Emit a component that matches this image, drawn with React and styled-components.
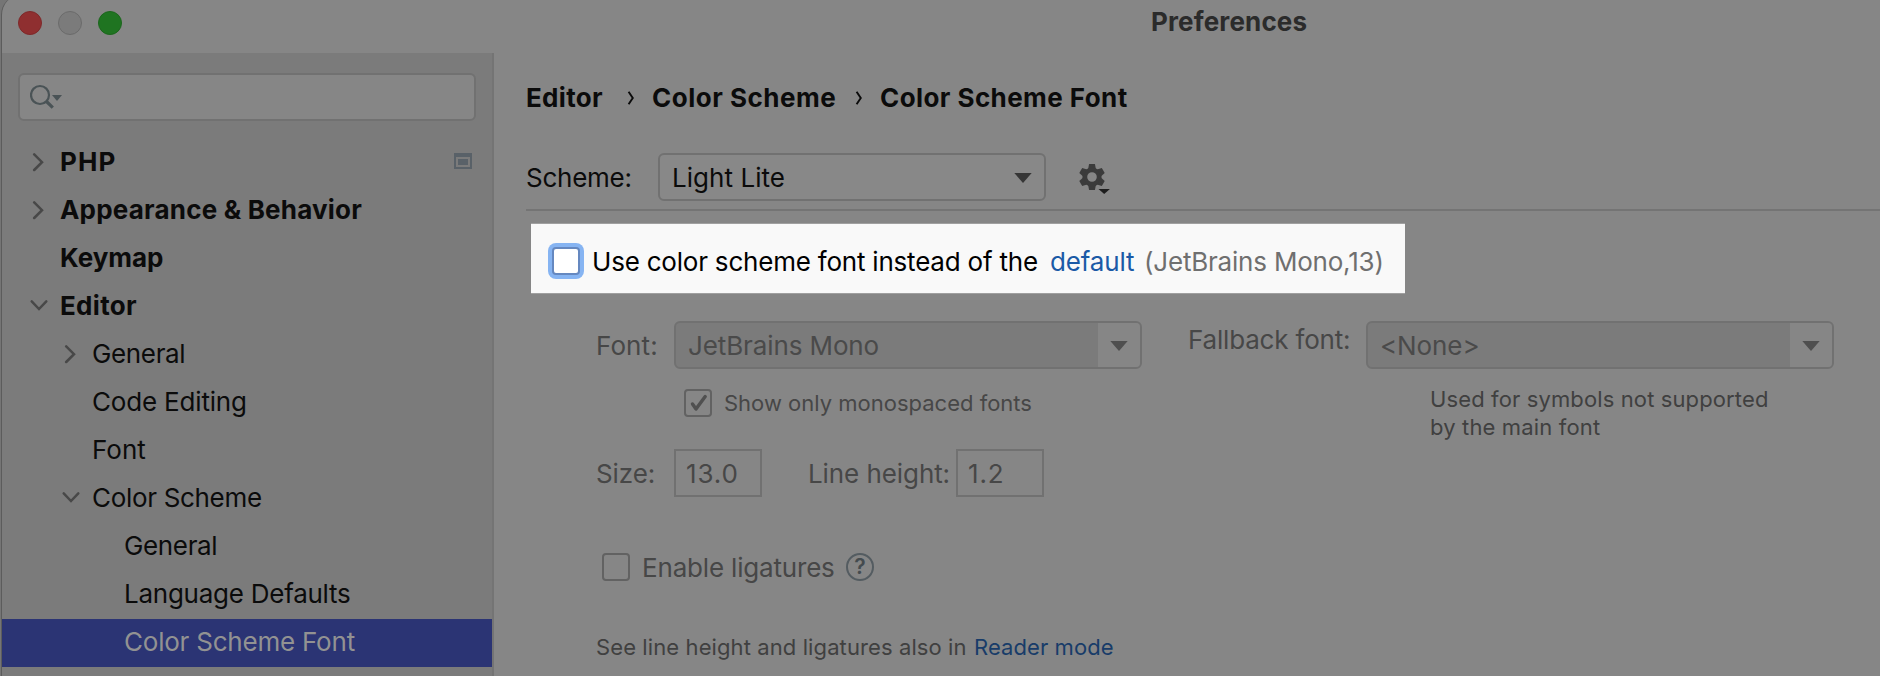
import React from 'react';
import styled, { createGlobalStyle } from 'styled-components';

const c = {
  pane: '#868686',
  side: '#7b7b7b',
  line: '#717171',
  ink: '#0b0b0b',
  muted: '#474747',
  hint: '#404040',
};

const Global = createGlobalStyle`
  * { box-sizing: border-box; }
  body {
    margin: 0;
    overflow: hidden;
    background: #757575;
    font-family: Inter, "Liberation Sans", sans-serif;
    font-size: 26px;
    line-height: 31px;
    color: ${c.ink};
  }
`;

const Window = styled.div`
  display: flex;
  flex-direction: column;
  height: 681px;
  margin: -5px 0 0 1px;
  overflow: hidden;
  border-left: 1px solid #5c5c5c;
  border-top-left-radius: 20px;
  background: ${c.pane};
`;

const TitleBar = styled.header`
  display: flex;
  align-items: center;
  flex: none;
  height: 58px;
  padding: 0 0 2px 16px;
`;

const Lights = styled.div`
  display: flex;
  gap: 16px;
  width: 1133px;
`;

const Light = styled.span`
  width: 24px;
  height: 24px;
  border-radius: 50%;
  border: 1px solid ${(p) => p.$edge};
  background: ${(p) => p.$fill};
`;

const Text = styled.span`
  display: block;
  flex: none;
  white-space: pre;
  color: ${(p) => p.$color || 'inherit'};
  font-size: ${(p) => (p.$small ? 22 : 26)}px;
  line-height: ${(p) => (p.$small ? 28 : 31)}px;
  font-weight: ${(p) => p.$weight || 400};
  letter-spacing: ${(p) => p.$track || 0}px;
  width: ${(p) => (p.$width ? `${p.$width}px` : 'auto')};
`;

const Title = styled(Text)`
  padding-bottom: 3px;
`;

const Body = styled.div`
  display: flex;
  flex: 1;
  min-height: 0;
`;

const Sidebar = styled.aside`
  flex: none;
  width: 492px;
  padding-top: 20px;
  border-right: 2px solid #747474;
  background: ${c.side};
`;

const Search = styled.div`
  display: flex;
  align-items: center;
  height: 48px;
  margin: 0 16px 18px;
  padding-left: 10px;
  border: 2px solid ${c.line};
  border-radius: 6px;
  background: ${c.pane};
`;

const TreeRow = styled.div`
  display: flex;
  align-items: center;
  height: 48px;
  padding: 0 20px 0 ${(p) => 27 + p.$level * 32}px;
  color: ${(p) => (p.$selected ? '#929292' : c.ink)};
  background: ${(p) => (p.$selected ? '#2b3474' : 'transparent')};
`;

const Toggle = styled.svg`
  flex: none;
  width: 20px;
  height: 20px;
  margin-right: 11px;
  fill: none;
  stroke: #484848;
  stroke-width: 2.5;
  stroke-linecap: round;
`;

const TreeLabel = styled(Text)`
  flex: 1;
  padding-bottom: 4px;
`;

const Badge = styled.svg`
  width: 18px;
  height: 16px;
  margin-bottom: 4px;
`;

const Main = styled.main`
  flex: 1;
  min-width: 0;
`;

const Breadcrumbs = styled.nav`
  display: flex;
  align-items: center;
  height: 89px;
  padding-left: 32px;
`;

const Crumb = styled(Text)`
  font-weight: 700;
`;

const SchemeRow = styled.div`
  display: flex;
  align-items: center;
  height: 48px;
  margin-top: 11px;
  padding-left: 32px;
`;

const Select = styled.div`
  display: flex;
  align-items: center;
  justify-content: space-between;
  flex: none;
  width: ${(p) => p.$width}px;
  height: 48px;
  padding-left: 12px;
  overflow: hidden;
  border: 2px solid ${c.line};
  border-radius: 6px;
  background: ${(p) => (p.$disabled ? c.side : '#888')};
  color: ${(p) => (p.$disabled ? '#4a4a4a' : c.ink)};
`;

const SelectButton = styled.span`
  display: flex;
  align-items: center;
  align-self: stretch;
  width: 42px;
  padding-left: 12px;
  padding-top: 2px;
  background: ${(p) => (p.$disabled ? c.pane : 'transparent')};
`;

const Gear = styled.svg`
  width: 34px;
  height: 34px;
  margin-left: 32px;
`;

const Divider = styled.div`
  height: 2px;
  margin: 8px 0 0 32px;
  background: #747474;
`;

const Spotlight = styled.div`
  display: flex;
  align-items: center;
  width: 874px;
  height: 71px;
  margin: 12px 0 0 37px;
  padding: 5px 0 0 21px;
  border: solid #a0a0a0;
  border-width: 1px 0;
  background: #f9f9f9;
  background-clip: padding-box;
`;

const CheckBox = styled.span`
  display: flex;
  flex: none;
  width: 28px;
  height: 28px;
  border: 2px solid ${(p) => (p.$focused ? '#6588c0' : '#626262')};
  border-radius: 4px;
  background: ${(p) => (p.$focused ? '#fff' : 'transparent')};
  box-shadow: ${(p) => (p.$focused ? '0 0 0 4px #86b4f2' : 'none')};
`;

const Form = styled.section`
  padding: 27px 0 0 102px;
  color: ${c.muted};
`;

const Columns = styled.div`
  display: flex;
  height: 120px;
`;

const Column = styled.div`
  flex: none;
  width: ${(p) => p.$width}px;
`;

const Row = styled.div`
  display: flex;
  align-items: center;
  height: ${(p) => p.$height || 48}px;
  margin: ${(p) => p.$top || 0}px 0 0 ${(p) => p.$left || 0}px;
`;

const Raised = styled.div`
  padding-bottom: 12px;
`;

const Hint = styled.div`
  margin: 16px 0 0 242px;
`;

const NumberField = styled.div`
  display: flex;
  align-items: center;
  flex: none;
  width: 88px;
  height: 48px;
  padding-left: 10px;
  border: 2px solid ${c.line};
`;

const Help = styled.span`
  display: flex;
  align-items: center;
  justify-content: center;
  width: 28px;
  height: 28px;
  border: 2px solid #545c61;
  border-radius: 50%;
  color: #444b4f;
  font-size: 21px;
  font-weight: 600;
  line-height: 24px;
`;

const Gap = styled.span`
  flex: none;
  width: ${(p) => p.$w}px;
`;

const Triangle = ({ color }) => (
  <svg width="18" height="10" viewBox="0 0 18 10">
    <path d="M0.3 0h17.4L9 10z" fill={color} />
  </svg>
);

const CrumbArrow = () => (
  <svg width="8" height="14" viewBox="0 0 8 14">
    <path d="M1.6 0.7 L5.8 7 L1.6 13.3" fill="none" stroke={c.ink} strokeWidth="1.9" />
  </svg>
);

const ModuleIcon = () => (
  <Badge viewBox="0 0 18 16">
    <path fillRule="evenodd" fill="#596168" d="M0 0h18v16H0zM2 4v10h14V4zM4 6h10v6H4z" />
  </Badge>
);

const tree = [
  { label: 'PHP', level: 0, state: 'closed', track: 1.1, module: true },
  { label: 'Appearance & Behavior', level: 0, state: 'closed', track: 0.2 },
  { label: 'Keymap', level: 0, track: -0.03 },
  { label: 'Editor', level: 0, state: 'open', track: 0.3 },
  { label: 'General', level: 1, state: 'closed', track: -0.35 },
  { label: 'Code Editing', level: 1, track: -0.18 },
  { label: 'Font', level: 1, track: 0 },
  { label: 'Color Scheme', level: 1, state: 'open', track: -0.32 },
  { label: 'General', level: 2, track: -0.35 },
  { label: 'Language Defaults', level: 2, track: -0.25 },
  { label: 'Color Scheme Font', level: 2, track: -0.22, selected: true },
];

const togglePaths = {
  closed: 'M5.2 1.4 L13 9.2 L5.2 17',
  open: 'M2.7 4.4 L10 12 L17.3 4.4',
};

const Combo = ({ children, track }) => (
  <Select $width={468} $disabled>
    <Text $track={track}>{children}</Text>
    <SelectButton $disabled>
      <Triangle color="#4f4f4f" />
    </SelectButton>
  </Select>
);

export default function App() {
  return (
    <>
      <Global />
      <Window>
        <TitleBar>
          <Lights>
            <Light $fill="#8f2f30" $edge="#7e292a" />
            <Light $fill="#7b7b7b" $edge="#6b6b6b" />
            <Light $fill="#1f7421" $edge="#1c661d" />
          </Lights>
          <Title $weight={700} $color="#2b2b2b" $track={0.15}>Preferences</Title>
        </TitleBar>
        <Body>
          <Sidebar>
            <Search>
              <svg width="36" height="30" viewBox="0 0 36 30">
                <circle cx="10" cy="13" r="9" fill="none" stroke="#4a5356" strokeWidth="2.2" />
                <path d="M16.5 19.5 L22.8 25.6" stroke="#4a5356" strokeWidth="3.2" />
                <path d="M22 13h10l-5 6z" fill="#4a5356" />
              </svg>
            </Search>
            {tree.map((n, i) => (
              <TreeRow key={i} $level={n.level} $selected={n.selected}>
                <Toggle viewBox="0 0 20 20">
                  {n.state && <path d={togglePaths[n.state]} />}
                </Toggle>
                <TreeLabel $weight={n.level ? 400 : 700} $track={n.track}>{n.label}</TreeLabel>
                {n.module && <ModuleIcon />}
              </TreeRow>
            ))}
          </Sidebar>
          <Main>
            <Breadcrumbs>
              <Crumb $width={101} $track={0.3}>Editor</Crumb>
              <CrumbArrow />
              <Gap $w={17} />
              <Crumb $width={203} $track={0.5}>Color Scheme</Crumb>
              <CrumbArrow />
              <Gap $w={17} />
              <Crumb $track={0.42}>Color Scheme Font</Crumb>
            </Breadcrumbs>
            <SchemeRow>
              <Text $width={132} $track={-0.25}>Scheme:</Text>
              <Select $width={388}>
                <Text $track={0.05}>Light Lite</Text>
                <SelectButton>
                  <Triangle color="#363636" />
                </SelectButton>
              </Select>
              <Gear viewBox="0 0 34 34">
                <g transform="translate(14 17)" fill="#3b3b3b">
                  <circle r="7.2" fill="none" stroke="#3b3b3b" strokeWidth="4.8" />
                  {[0, 60, 120, 180, 240, 300].map((a) => (
                    <path key={a} d="M-2.9 -13h5.8l1 5h-7.8z" transform={`rotate(${a})`} />
                  ))}
                </g>
                <path d="M20.5 29h11.4l-5.7 5z" fill="#1d1d1d" />
              </Gear>
            </SchemeRow>
            <Divider />
            <Spotlight>
              <CheckBox $focused />
              <Gap $w={12} />
              <Text $color="#000" $width={458} $track={-0.21}>Use color scheme font instead of the</Text>
              <Text $color="#1b5aa6" $width={94} $track={-0.15}>default</Text>
              <Text $color="#6f6f6f" $track={-0.2}>(JetBrains Mono,13)</Text>
            </Spotlight>
            <Form>
              <Columns>
                <Column $width={592}>
                  <Row>
                    <Text $width={78} $track={0.1}>Font:</Text>
                    <Combo track={-0.11}>JetBrains Mono</Combo>
                  </Row>
                  <Row $top={20} $left={88} $height={28}>
                    <CheckBox>
                      <svg width="24" height="24" viewBox="0 0 24 24">
                        <path d="M6.5 13 L10 18 L19.2 5.5" fill="none" stroke="#505050" strokeWidth="3.4" strokeLinecap="round" strokeLinejoin="round" />
                      </svg>
                    </CheckBox>
                    <Gap $w={12} />
                    <Text $small>Show only monospaced fonts</Text>
                  </Row>
                </Column>
                <Column $width={660}>
                  <Row>
                    <Raised>
                      <Text $width={178} $track={-0.18}>Fallback font:</Text>
                    </Raised>
                    <Combo track={-0.1}>{'<None>'}</Combo>
                  </Row>
                  <Hint>
                    <Text $small $color={c.hint} $track={0.12}>Used for symbols not supported</Text>
                    <Text $small $color={c.hint} $track={0.15}>by the main font</Text>
                  </Hint>
                </Column>
              </Columns>
              <Row $top={8}>
                <Text $width={78} $track={-0.1}>Size:</Text>
                <NumberField><Text $track={0.9}>13.0</Text></NumberField>
                <Gap $w={46} />
                <Text $width={148} $track={-0.08}>Line height:</Text>
                <NumberField><Text $track={0.8}>1.2</Text></NumberField>
              </Row>
              <Row $top={56} $left={6} $height={28}>
                <CheckBox />
                <Gap $w={12} />
                <Text $width={204} $track={-0.18}>Enable ligatures</Text>
                <Help>?</Help>
              </Row>
              <Row $top={52} $height={28}>
                <Text $small $color={c.hint} $width={378} $track={0.1}>See line height and ligatures also in</Text>
                <Text $small $color="#183c69" $track={0.08}>Reader mode</Text>
              </Row>
            </Form>
          </Main>
        </Body>
      </Window>
    </>
  );
}
